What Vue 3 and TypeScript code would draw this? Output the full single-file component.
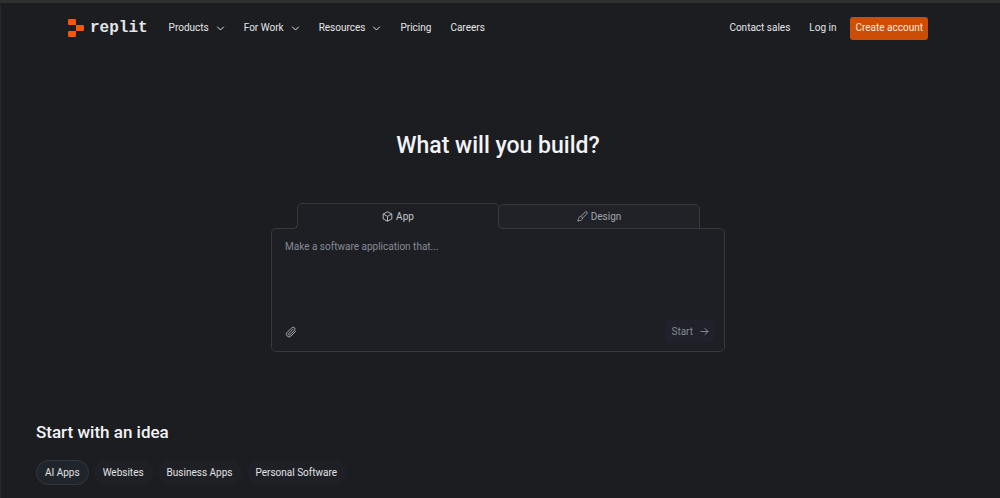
<script setup lang="ts">
import { ref } from 'vue'

interface NavItem {
  label: string
  menu: boolean
}

const navItems: NavItem[] = [
  { label: 'Products', menu: true },
  { label: 'For Work', menu: true },
  { label: 'Resources', menu: true },
  { label: 'Pricing', menu: false },
  { label: 'Careers', menu: false },
]

const ideas: string[] = ['AI Apps', 'Websites', 'Business Apps', 'Personal Software']
const activeIdea = ref('AI Apps')
const activeTab = ref<'app' | 'design'>('app')
const prompt = ref('')
</script>

<template>
  <div class="page">
    <header class="header">
      <a class="logo" href="#" aria-label="replit home">
        <svg width="16" height="18" viewBox="0 0 16 18" aria-hidden="true">
          <path
            fill="#f9550b"
            d="M1.200 0H6.800a1.200 1.200 0 0 1 1.200 1.200V6H1.200A1.200 1.200 0 0 1 0 4.800V1.200A1.200 1.200 0 0 1 1.200 0ZM8 6h6.800A1.200 1.200 0 0 1 16 7.200v3.600a1.200 1.200 0 0 1-1.200 1.200H8ZM1.200 12H8v4.800A1.200 1.200 0 0 1 6.800 18H1.200A1.200 1.200 0 0 1 0 16.800v-3.600A1.200 1.200 0 0 1 1.200 12Z"
          />
        </svg>
        <span class="wordmark">replit</span>
      </a>
      <nav class="nav">
        <template v-for="item in navItems" :key="item.label">
          <button v-if="item.menu" class="nav-item nav-menu" type="button">
            <span>{{ item.label }}</span>
            <svg width="9" height="9" viewBox="0 0 9 9" aria-hidden="true">
              <path d="M1.500 3l3 3 3-3" fill="none" stroke="currentColor" stroke-linecap="round" stroke-linejoin="round" />
            </svg>
          </button>
          <a v-else class="nav-item" href="#">{{ item.label }}</a>
        </template>
      </nav>
      <div class="account">
        <a class="nav-item" href="#">Contact sales</a>
        <a class="nav-item" href="#">Log in</a>
        <button class="create" type="button">Create account</button>
      </div>
    </header>

    <main>
      <section class="hero">
        <h1>What will you build?</h1>
        <form class="composer" @submit.prevent>
          <div class="tabs">
            <button
              class="tab"
              :class="{ active: activeTab === 'app' }"
              type="button"
              @click="activeTab = 'app'"
            >
              <svg width="11" height="11" viewBox="0 0 11 11" aria-hidden="true">
                <path
                  d="M5.500.8L9.800 3v5L5.500 10.200 1.200 8V3ZM1.200 3l4.300 2.300L9.800 3M5.500 5.300v4.900"
                  fill="none"
                  stroke="currentColor"
                  stroke-width="0.9"
                  stroke-linejoin="round"
                />
              </svg>
              <span>App</span>
            </button>
            <button
              class="tab"
              :class="{ active: activeTab === 'design' }"
              type="button"
              @click="activeTab = 'design'"
            >
              <svg width="11" height="11" viewBox="0 0 11 11" aria-hidden="true">
                <path
                  d="M3.900 5.300L8.200 1.100a1.200 1.200 0 0 1 1.700 1.700L5.600 7M3.900 5.300L5.600 7M3.900 5.300C2.500 5.600 1.800 6.600 1.500 7.700L.8 10.100 3.300 9.500C4.400 9.200 5.400 8.400 5.600 7"
                  fill="none"
                  stroke="currentColor"
                  stroke-width="0.9"
                  stroke-linejoin="round"
                />
              </svg>
              <span>Design</span>
            </button>
          </div>
          <div class="panel">
            <textarea v-model="prompt" aria-label="Prompt" placeholder="Make a software application that..."></textarea>
            <div class="actions">
              <button class="attach" type="button" aria-label="Attach file">
                <svg width="12" height="12" viewBox="0 0 12 12" aria-hidden="true">
                  <path
                    d="M10.600 5.400L6 10a2.500 2.500 0 0 1-3.900-3.500l4.700-4.700a1.800 1.800 0 0 1 2.700 2.500L5 8.800a.8.8 0 0 1-1.300-1.200L7.900 3.400"
                    fill="none"
                    stroke="currentColor"
                    stroke-linecap="round"
                    stroke-linejoin="round"
                  />
                </svg>
              </button>
              <button class="start" type="submit">
                <span>Start</span>
                <svg width="9" height="9" viewBox="0 0 9 9" aria-hidden="true">
                  <path d="M1 4.500h7M5 1.500l3 3-3 3" fill="none" stroke="currentColor" stroke-linecap="round" stroke-linejoin="round" />
                </svg>
              </button>
            </div>
          </div>
        </form>
      </section>

      <section class="ideas">
        <h2>Start with an idea</h2>
        <div class="chips">
          <button
            v-for="idea in ideas"
            :key="idea"
            class="chip"
            :class="{ active: idea === activeIdea }"
            type="button"
            @click="activeIdea = idea"
          >
            {{ idea }}
          </button>
        </div>
      </section>
    </main>
  </div>
</template>

<style>
body {
  background: #1c1d21;
}
</style>

<style scoped>
.page {
  box-sizing: border-box;
  min-height: 100vh;
  border-top: 3px solid #2e302e;
  border-left: 1px solid #27282c;
  background: #1c1d21;
  color: #e4e5e8;
  font-family: 'Roboto', 'Liberation Sans', sans-serif;
  font-size: 10px;
  line-height: 16px;
}

button {
  margin: 0;
  padding: 0;
  border: 0;
  background: none;
  color: inherit;
  font: inherit;
  cursor: pointer;
}

a {
  color: inherit;
  text-decoration: none;
}

svg {
  display: block;
  flex: none;
}

.header {
  display: flex;
  align-items: center;
  height: 50px;
  padding: 0 72px 0 67px;
}

.logo {
  display: flex;
  align-items: center;
  gap: 6px;
}

.wordmark {
  font-family: 'Liberation Mono', monospace;
  font-size: 16px;
  font-weight: 700;
  line-height: 20px;
}

.nav {
  display: flex;
  align-items: center;
  gap: 19px;
  margin-left: 21px;
}

.nav-item {
  white-space: nowrap;
}

.nav-menu {
  display: flex;
  align-items: center;
  gap: 7px;
}

.account {
  display: flex;
  align-items: center;
  gap: 19px;
  margin-left: auto;
}

.create {
  height: 23px;
  margin-left: -5px;
  padding: 0 5px;
  border-radius: 3px;
  background: #cc4e06;
  color: #fbe9df;
}

.hero {
  display: flex;
  flex-direction: column;
  align-items: center;
  padding: 77px 5px 0 0;
}

h1 {
  margin: 0;
  color: #f2f3f5;
  font-size: 23px;
  font-weight: 500;
  line-height: 32px;
}

.composer {
  width: 100%;
  max-width: 454px;
  margin-top: 41px;
}

.tabs {
  display: flex;
  align-items: flex-end;
  height: 26px;
  margin: 0 25px -1px 26px;
}

.tab {
  position: relative;
  box-sizing: border-box;
  display: flex;
  flex: 1;
  align-items: center;
  justify-content: center;
  gap: 3px;
  height: 25px;
  border: 1px solid #36383d;
  border-radius: 5px 5px 0 0;
  background: #212227;
  color: #a1a5ad;
}

.tab + .tab {
  margin-left: -1px;
}

.tab.active {
  z-index: 1;
  height: 26px;
  border-bottom: 0;
  background: #1e1f24;
  color: #c3c6cc;
}

/* Flared feet that join the active tab to the panel below it */
.tab.active::before,
.tab.active::after {
  content: '';
  position: absolute;
  bottom: 0;
  width: 5px;
  height: 5px;
}

.tab.active::before {
  right: 100%;
  background: radial-gradient(circle at 0 0, #1c1d21 4px, #36383d 4px, #36383d 5px, #1e1f24 5px);
}

.tab.active::after {
  left: 100%;
  background: radial-gradient(circle at 100% 0, #212227 4px, #36383d 4px, #36383d 5px, #1e1f24 5px);
}

.panel {
  box-sizing: border-box;
  display: flex;
  flex-direction: column;
  height: 124px;
  padding: 10px 9px 8px 13px;
  border: 1px solid #36383d;
  border-radius: 5px;
  background: #1e1f24;
}

textarea {
  flex: 1;
  padding: 0;
  border: 0;
  outline: 0;
  background: none;
  color: inherit;
  font: inherit;
  resize: none;
}

textarea::placeholder {
  color: #848b98;
  opacity: 1;
}

.actions {
  display: flex;
  align-items: center;
  justify-content: space-between;
}

.attach {
  color: #a5a7ab;
}

.start {
  display: flex;
  align-items: center;
  gap: 7px;
  height: 23px;
  padding: 0 6px;
  border-radius: 4px;
  background: #20212a;
  color: #858890;
}

.ideas {
  padding: 68px 35px 12px;
}

h2 {
  margin: 0;
  color: #f2f3f5;
  font-size: 17px;
  font-weight: 500;
  line-height: 24px;
}

.chips {
  display: flex;
  flex-wrap: wrap;
  gap: 5px;
  margin-top: 16px;
}

.chip {
  height: 25px;
  padding: 0 8px;
  border: 1px solid transparent;
  border-radius: 13px;
  background: #1f2025;
  color: #e0e2e5;
}

.chip.active {
  border-color: #34383e;
  background: #20252b;
}
</style>
